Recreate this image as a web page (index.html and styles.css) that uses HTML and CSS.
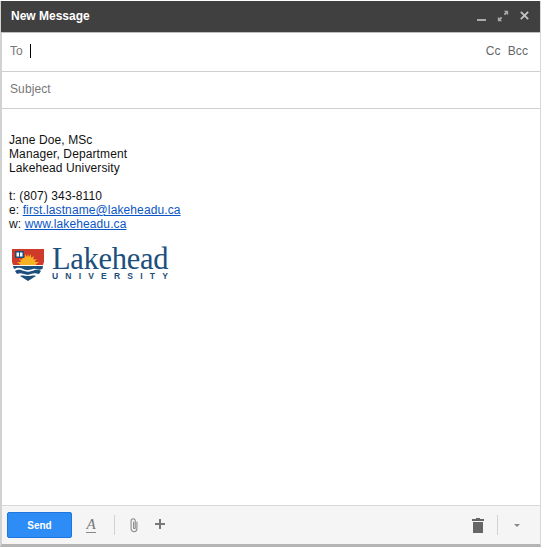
FILE: index.html
```html
<!DOCTYPE html>
<html lang="en">
<head>
  <meta charset="UTF-8" />
  <title>New Message</title>
  <link rel="stylesheet" href="styles.css">
</head>
<body>
  <div class="compose">
    <div class="compose-header">
      <span class="compose-title">New Message</span>
      <div class="window-btns">
        <svg width="11" height="12" viewBox="0 0 11 12"><rect x="1" y="9" width="9" height="2" fill="#aaa"/></svg>
        <svg width="12" height="12" viewBox="0 0 14 14" fill="#a8a8a8"><path d="M8 1h5v5l-1.700-1.700-1.900 1.900-1.600-1.600 1.900-1.900zM6 13H1V8l1.700 1.700 1.900-1.900 1.600 1.600-1.900 1.900z"/></svg>
        <svg width="11" height="11" viewBox="0 0 12 12" stroke="#c4c4c4" stroke-width="2"><path d="M2 2l8 8M10 2l-8 8"/></svg>
      </div>
    </div>

    <div class="field-row to-row">
      <span class="field-label">To</span>
      <span class="caret"></span>
      <span class="cc-links"><span>Cc</span><span>Bcc</span></span>
    </div>
    <div class="field-row subject-row">
      <span class="field-label">Subject</span>
    </div>

    <div class="compose-body">
      <p class="sig-block">Jane Doe, MSc<br>Manager, Department<br>Lakehead University</p>
      <p class="sig-block">t: (807) 343-8110<br>e: <a href="#">first.lastname@lakeheadu.ca</a><br>w: <a href="#">www.lakeheadu.ca</a></p>
      <div class="logo">
        <svg width="34" height="33" viewBox="0 0 34 33">
          <path d="M1 1h32v13l-1 3H2L1 14z" fill="#cf3a2b"/>
          <path d="M9 17a8 8 0 0 1 16 0z" fill="#f5b324"/>
          <path d="M17 6l1 3 2-3 0 4 3-2-1 4 4-1-3 3 5 0-4 3H10l-4-3 5 0-3-3 4 1-1-4 3 2 0-4 2 3z" fill="#f5b324"/>
          <path d="M4 3h9v7H4z" fill="#1c4f7c"/>
          <path d="M5.500 4.500h2.500v4h-2.500zM9 4.500h2.500v4H9z" fill="#fff"/>
          <path d="M2 18h30l-.5 3c-5 2-5-1-9.500 0s-5 2-10 0-5-1-9 0z" fill="#1c4f7c"/>
          <path d="M4 23c4-2 5-1 9 0s4 1 8 0 5-2 9 0l-2 3c-4-1-5-1-8 0s-4 1-7 0-5-1-7 0z" fill="#1c4f7c"/>
          <path d="M9 28c3-1 4 0 8 0s5-1 8 0l-8 5z" fill="#1c4f7c"/>
        </svg>
        <div class="logo-text">
          <span class="logo-name">Lakehead</span>
          <span class="logo-sub">UNIVERSITY</span>
        </div>
      </div>
    </div>

    <div class="compose-footer">
      <button class="send-btn">Send</button>
      <span class="format-icon">A</span>
      <span class="divider"></span>
      <svg class="clip" width="10" height="16" viewBox="0 0 12 18" fill="none" stroke="#8a8a8a" stroke-width="1.300"><path d="M9.500 5v8.500a3.500 3.500 0 0 1-7 0V4a2.500 2.500 0 0 1 5 0v8.500a1 1 0 0 1-2 0V5"/></svg>
      <svg class="plus" width="10" height="10" viewBox="0 0 10 10"><path d="M4 0h2v4h4v2H6v4H4V6H0V4h4z" fill="#777"/></svg>
      <span class="spacer"></span>
      <svg class="trash" width="12" height="15" viewBox="0 0 12 15"><path d="M4 0h4v1h4v2H0V1h4zM1 4h10v11H1z" fill="#666"/></svg>
      <span class="divider divider-right"></span>
      <span class="more-arrow"></span>
    </div>
  </div>
</body>
</html>
```

FILE: styles.css
```css
* {
  box-sizing: border-box;
  margin: 0;
  padding: 0;
}
body {
  background: #fff;
  font-family: "Liberation Sans", Arial, sans-serif;
  height: 548px;
  overflow: hidden;
}
.compose {
  width: 541px;
  height: 546px;
  margin-top: 1px;
  display: flex;
  flex-direction: column;
  border-left: 2px solid #d2d2d2;
  border-right: 1px solid #d8d8d8;
  border-bottom: 3px solid #b4b4b4;
}
.compose-header {
  height: 32px;
  background: #404040;
  margin-left: -1px;
  display: flex;
  justify-content: space-between;
  align-items: center;
  padding: 0 10px 2px 10px;
  border-bottom: 1px solid #bdbdbd;
}
.compose-title {
  color: #fff;
  font-size: 12px;
  font-weight: bold;
}
.window-btns {
  display: flex;
  align-items: center;
  gap: 10px;
}
.field-row {
  display: flex;
  align-items: center;
  padding: 0 12px 0 8px;
  border-bottom: 1px solid #cfcfcf;
  font-size: 12px;
  letter-spacing: 0.1px;
}
.to-row {
  height: 39px;
  padding-bottom: 3px;
}
.subject-row {
  height: 37px;
  padding-bottom: 2px;
}
.field-label {
  color: #777;
}
.caret {
  width: 1px;
  height: 14px;
  background: #000;
  margin-left: 7px;
}
.cc-links {
  margin-left: auto;
  display: flex;
  gap: 7px;
  color: #666;
}
.compose-body {
  flex: 1;
  padding: 24px 0 0 7px;
  font-size: 12px;
  line-height: 14px;
  letter-spacing: 0.11px;
  color: #111;
}
.sig-block {
  margin-bottom: 14px;
}
.sig-block a {
  color: #0a55c4;
}
.logo {
  display: flex;
  gap: 7px;
  margin: 17px 0 0 2px;
  align-items: flex-start;
}
.logo-text {
  display: flex;
  flex-direction: column;
  color: #1c4f7c;
}
.logo-name {
  font-family: "Liberation Serif", serif;
  font-size: 30.500px;
  line-height: 23px;
  letter-spacing: -0.3px;
}
.logo-sub {
  font-size: 8.500px;
  font-weight: bold;
  line-height: 8px;
  letter-spacing: 7.200px;
  margin-top: 1px;
  white-space: nowrap;
}
.compose-footer {
  height: 39px;
  background: #f5f5f5;
  border-top: 1px solid #d8d8d8;
  display: flex;
  align-items: center;
  padding: 0 20px 0 5px;
}
.send-btn {
  width: 65px;
  height: 26px;
  background: #2d8cf6;
  border: 1px solid #1f76dc;
  border-radius: 2px;
  color: #fff;
  font-family: inherit;
  font-size: 10px;
  font-weight: bold;
}
.format-icon {
  margin-left: 14px;
  font-family: "Liberation Serif", serif;
  font-style: italic;
  font-size: 15px;
  line-height: 15px;
  color: #777;
  border-bottom: 1px solid #888;
  width: 10px;
  text-align: center;
}
.divider {
  width: 1px;
  height: 20px;
  background: #d2d2d2;
  margin-left: 18px;
}
.clip {
  margin-left: 14px;
}
.plus {
  margin-left: 16px;
  margin-bottom: 3px;
}
.spacer {
  flex: 1;
}
.trash {
  margin-right: 2px;
}
.divider-right {
  margin-left: 11px;
}
.more-arrow {
  margin-left: 16px;
  border-top: 3px solid #888;
  border-left: 3px solid transparent;
  border-right: 3px solid transparent;
}
```
